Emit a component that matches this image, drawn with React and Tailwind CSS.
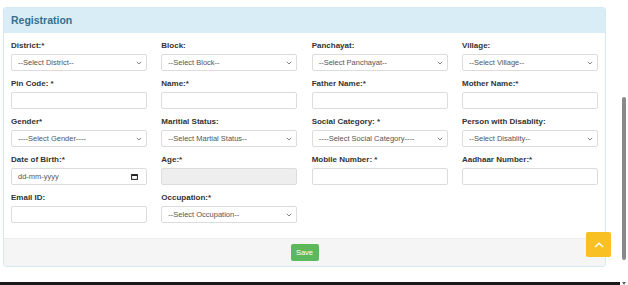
import React from "react";

const F = { fontFamily: '"Liberation Sans", Arial, sans-serif' };

function Chevron() {
  return (
    <svg width="6" height="4" viewBox="0 0 6 4" className="shrink-0">
      <path d="M0.8 0.8 L3 3 L5.2 0.8" fill="none" stroke="#777" strokeWidth="0.9" />
    </svg>
  );
}

function Select({ text }) {
  return (
    <div className="h-[17px] border border-[#dcdcdc] rounded-[2px] bg-white flex items-center justify-between pl-[6px] pr-[4px]">
      <span className="text-[7.5px] text-[#555] leading-none">{text}</span>
      <Chevron />
    </div>
  );
}

function Input({ disabled }) {
  return (
    <div
      className={
        "h-[17px] border border-[#dcdcdc] rounded-[2px] " +
        (disabled ? "bg-[#eeeeee]" : "bg-white")
      }
    />
  );
}

function DateInput() {
  return (
    <div className="h-[17px] border border-[#dcdcdc] rounded-[2px] bg-white flex items-center justify-between pl-[6px] pr-[8px]">
      <span className="text-[7.5px] text-[#555] leading-none">dd-mm-yyyy</span>
      <svg width="7" height="6" viewBox="0 0 7 6">
        <rect x="0.6" y="0.6" width="5.8" height="4.8" fill="none" stroke="#222" strokeWidth="1" />
        <rect x="0.6" y="0.6" width="5.8" height="1.4" fill="#222" />
      </svg>
    </div>
  );
}

function Field({ label, children }) {
  return (
    <div className="flex flex-col">
      <div className="h-[10px] mb-[3px] text-[8px] font-bold text-[#333] leading-[10px] whitespace-nowrap">
        {label}
      </div>
      {children}
    </div>
  );
}

export default function App() {
  return (
    <div className="relative w-[628px] h-[285px] bg-white flex flex-col overflow-hidden" style={F}>
      <div className="flex-1 flex">
        <div className="flex-1 pt-[7px] pl-[3px]">
          <div className="w-[603px] border border-[#d6e9f2] rounded-[3px] overflow-hidden">
            <div className="h-[25px] bg-[#d9edf7] flex items-center pl-[7px]">
              <span className="text-[10.5px] font-bold text-[#31708f]">Registration</span>
            </div>
            <div className="bg-white px-[7px] pt-[8px] pb-[15px]">
              <div className="grid grid-cols-4 gap-x-[14.3px] gap-y-[8px]">
                <Field label="District:*"><Select text="--Select District--" /></Field>
                <Field label="Block:"><Select text="--Select Block--" /></Field>
                <Field label="Panchayat:"><Select text="--Select Panchayat--" /></Field>
                <Field label="Village:"><Select text="--Select Village--" /></Field>

                <Field label="Pin Code: *"><Input /></Field>
                <Field label="Name:*"><Input /></Field>
                <Field label="Father Name:*"><Input /></Field>
                <Field label="Mother Name:*"><Input /></Field>

                <Field label="Gender*"><Select text="----Select Gender----" /></Field>
                <Field label="Maritial Status:"><Select text="--Select Martial Status--" /></Field>
                <Field label="Social Category: *"><Select text="----Select Social Category----" /></Field>
                <Field label="Person with Disablity:"><Select text="--Select Disablity--" /></Field>

                <Field label="Date of Birth:*"><DateInput /></Field>
                <Field label="Age:*"><Input disabled /></Field>
                <Field label="Mobile Number: *"><Input /></Field>
                <Field label="Aadhaar Number:*"><Input /></Field>

                <Field label="Email ID:"><Input /></Field>
                <Field label="Occupation:*"><Select text="--Select Occupation--" /></Field>
              </div>
            </div>
            <div className="h-[28px] bg-[#f5f5f5] border-t border-[#ececec] flex items-center justify-center">
              <button className="h-[17px] w-[28px] bg-[#5cb85c] rounded-[2px] text-white text-[7.5px] leading-none">
                Save
              </button>
            </div>
          </div>
        </div>
        <div className="w-[8px] flex flex-col items-center pt-[97px] pb-[22px]">
          <div className="w-[4px] flex-1 bg-[#8a8a8a] rounded-full" />
        </div>
      </div>
      <div className="h-[3px] bg-[#1a1a1a] mr-[8px]" />
      <div className="absolute left-[586px] top-[232px] w-[25px] h-[25px] bg-[#f8c023] rounded-[2px] flex items-center justify-center">
        <svg width="10" height="6" viewBox="0 0 10 6">
          <path d="M1 5 L5 1.2 L9 5" fill="none" stroke="white" strokeWidth="1.5" />
        </svg>
      </div>
      <div className="absolute right-[2px] bottom-[0px] w-0 h-0 border-l-[2.5px] border-r-[2.5px] border-t-[3px] border-l-transparent border-r-transparent border-t-[#666]" />
    </div>
  );
}
